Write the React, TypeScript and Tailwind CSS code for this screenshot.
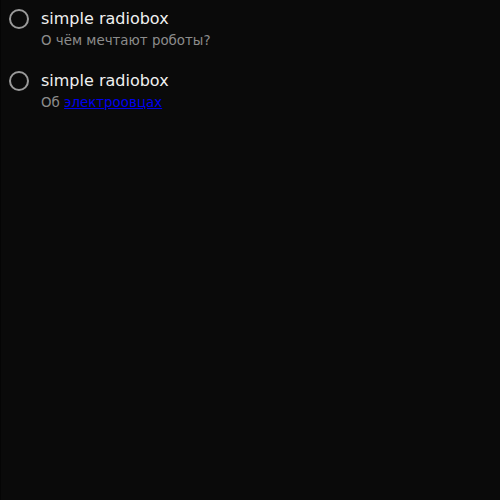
const items = [
  { label: "simple radiobox", desc: <>О чём мечтают роботы?</> },
  {
    label: "simple radiobox",
    desc: (
      <>
        Об{" "}
        <a href="#" className="text-[#0000ee] underline">
          электроовцах
        </a>
      </>
    ),
  },
];

export default function App() {
  return (
    <div
      className="h-[500px] w-[500px] bg-[#0a0a0a] border-l border-[#050505] pt-[8px] pl-[8px]"
      style={{ fontFamily: '"DejaVu Sans", sans-serif' }}
    >
      <div className="flex flex-col gap-[19px]">
        {items.map((it, i) => (
          <label key={i} className="flex items-start gap-[12px]">
            <span className="mt-[1px] h-[20px] w-[20px] shrink-0 rounded-full border-2 border-[#9a9a9a]" />
            <span className="flex flex-col">
              <span className="text-[16px] leading-[21px] text-[#f0f0f0]">{it.label}</span>
              <span className="mt-[2px] text-[13.4px] leading-[20px] text-[#8c8c8c]">{it.desc}</span>
            </span>
          </label>
        ))}
      </div>
    </div>
  );
}
